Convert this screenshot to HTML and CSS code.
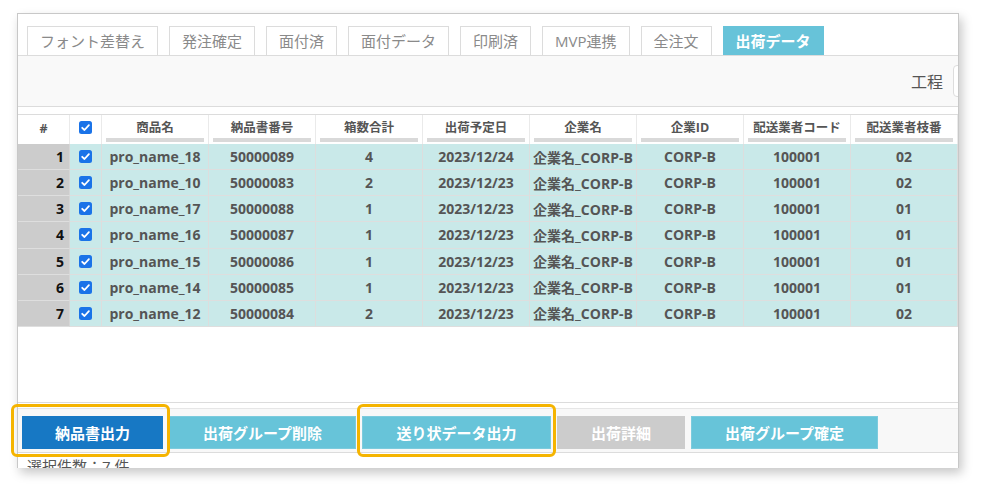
FILE: index.html
```html
<!DOCTYPE html>
<html lang="ja">
<head>
<meta charset="utf-8">
<link rel="stylesheet" href="styles.css">
</head>
<body>
<div class="shot">
  <div class="tabs">
    <div class="tab">フォント差替え</div>
    <div class="tab">発注確定</div>
    <div class="tab">面付済</div>
    <div class="tab">面付データ</div>
    <div class="tab">印刷済</div>
    <div class="tab">MVP連携</div>
    <div class="tab">全注文</div>
    <div class="tab active">出荷データ</div>
  </div>
  <div class="toolbar">
    <span class="label">工程</span>
    <div class="select"></div>
  </div>
  <div class="grid-area">
    <div class="row head">
      <div class="cell hnum">#</div>
      <div class="cell hchk"><svg class="cb" viewBox="0 0 13 13"><rect width="13" height="13" rx="2.5" fill="#1a73e8"/><path d="M3.2 6.8 L5.5 9 L9.9 4.2" fill="none" stroke="#fff" stroke-width="1.8" stroke-linecap="round" stroke-linejoin="round"/></svg></div>
      <div class="cell hcol"><span>商品名</span><i></i></div>
      <div class="cell hcol"><span>納品書番号</span><i></i></div>
      <div class="cell hcol"><span>箱数合計</span><i></i></div>
      <div class="cell hcol"><span>出荷予定日</span><i></i></div>
      <div class="cell hcol"><span>企業名</span><i></i></div>
      <div class="cell hcol"><span>企業ID</span><i></i></div>
      <div class="cell hcol"><span>配送業者コード</span><i></i></div>
      <div class="cell hcol"><span>配送業者枝番</span><i></i></div>
    </div>
    <div class="row">
      <div class="cell num">1</div><div class="cell chk"><svg class="cb" viewBox="0 0 13 13"><rect width="13" height="13" rx="2.5" fill="#1a73e8"/><path d="M3.2 6.8 L5.5 9 L9.9 4.2" fill="none" stroke="#fff" stroke-width="1.8" stroke-linecap="round" stroke-linejoin="round"/></svg></div>
      <div class="cell">pro_name_18</div><div class="cell">50000089</div><div class="cell">4</div><div class="cell">2023/12/24</div><div class="cell">企業名_CORP-B</div><div class="cell">CORP-B</div><div class="cell">100001</div><div class="cell">02</div>
    </div>
    <div class="row">
      <div class="cell num">2</div><div class="cell chk"><svg class="cb" viewBox="0 0 13 13"><rect width="13" height="13" rx="2.5" fill="#1a73e8"/><path d="M3.2 6.8 L5.5 9 L9.9 4.2" fill="none" stroke="#fff" stroke-width="1.8" stroke-linecap="round" stroke-linejoin="round"/></svg></div>
      <div class="cell">pro_name_10</div><div class="cell">50000083</div><div class="cell">2</div><div class="cell">2023/12/23</div><div class="cell">企業名_CORP-B</div><div class="cell">CORP-B</div><div class="cell">100001</div><div class="cell">02</div>
    </div>
    <div class="row">
      <div class="cell num">3</div><div class="cell chk"><svg class="cb" viewBox="0 0 13 13"><rect width="13" height="13" rx="2.5" fill="#1a73e8"/><path d="M3.2 6.8 L5.5 9 L9.9 4.2" fill="none" stroke="#fff" stroke-width="1.8" stroke-linecap="round" stroke-linejoin="round"/></svg></div>
      <div class="cell">pro_name_17</div><div class="cell">50000088</div><div class="cell">1</div><div class="cell">2023/12/23</div><div class="cell">企業名_CORP-B</div><div class="cell">CORP-B</div><div class="cell">100001</div><div class="cell">01</div>
    </div>
    <div class="row">
      <div class="cell num">4</div><div class="cell chk"><svg class="cb" viewBox="0 0 13 13"><rect width="13" height="13" rx="2.5" fill="#1a73e8"/><path d="M3.2 6.8 L5.5 9 L9.9 4.2" fill="none" stroke="#fff" stroke-width="1.8" stroke-linecap="round" stroke-linejoin="round"/></svg></div>
      <div class="cell">pro_name_16</div><div class="cell">50000087</div><div class="cell">1</div><div class="cell">2023/12/23</div><div class="cell">企業名_CORP-B</div><div class="cell">CORP-B</div><div class="cell">100001</div><div class="cell">01</div>
    </div>
    <div class="row">
      <div class="cell num">5</div><div class="cell chk"><svg class="cb" viewBox="0 0 13 13"><rect width="13" height="13" rx="2.5" fill="#1a73e8"/><path d="M3.2 6.8 L5.5 9 L9.9 4.2" fill="none" stroke="#fff" stroke-width="1.8" stroke-linecap="round" stroke-linejoin="round"/></svg></div>
      <div class="cell">pro_name_15</div><div class="cell">50000086</div><div class="cell">1</div><div class="cell">2023/12/23</div><div class="cell">企業名_CORP-B</div><div class="cell">CORP-B</div><div class="cell">100001</div><div class="cell">01</div>
    </div>
    <div class="row">
      <div class="cell num">6</div><div class="cell chk"><svg class="cb" viewBox="0 0 13 13"><rect width="13" height="13" rx="2.5" fill="#1a73e8"/><path d="M3.2 6.8 L5.5 9 L9.9 4.2" fill="none" stroke="#fff" stroke-width="1.8" stroke-linecap="round" stroke-linejoin="round"/></svg></div>
      <div class="cell">pro_name_14</div><div class="cell">50000085</div><div class="cell">1</div><div class="cell">2023/12/23</div><div class="cell">企業名_CORP-B</div><div class="cell">CORP-B</div><div class="cell">100001</div><div class="cell">01</div>
    </div>
    <div class="row">
      <div class="cell num">7</div><div class="cell chk"><svg class="cb" viewBox="0 0 13 13"><rect width="13" height="13" rx="2.5" fill="#1a73e8"/><path d="M3.2 6.8 L5.5 9 L9.9 4.2" fill="none" stroke="#fff" stroke-width="1.8" stroke-linecap="round" stroke-linejoin="round"/></svg></div>
      <div class="cell">pro_name_12</div><div class="cell">50000084</div><div class="cell">2</div><div class="cell">2023/12/23</div><div class="cell">企業名_CORP-B</div><div class="cell">CORP-B</div><div class="cell">100001</div><div class="cell">02</div>
    </div>
  </div>
  <div class="footer">
    <div class="btnbar">
      <div class="btn b1 primary">納品書出力</div>
      <div class="btn b2">出荷グループ削除</div>
      <div class="btn b3">送り状データ出力</div>
      <div class="btn b4 disabled">出荷詳細</div>
      <div class="btn b5">出荷グループ確定</div>
    </div>
    <div class="status">選択件数：7 件</div>
  </div>
</div>
<div class="hl hl1"></div>
<div class="hl hl2"></div>
</body>
</html>
```

FILE: styles.css
```css
html, body {
  margin: 0;
  padding: 0;
  background: #fff;
}
body {
  position: relative;
  width: 984px;
  height: 491px;
  overflow: hidden;
  font-family: "Open Sans", "Noto Sans CJK JP", sans-serif;
  color: #555;
}
.shot {
  margin: 13px 0 0 17px;
  width: 942px;
  height: 455px;
  box-sizing: border-box;
  border: 1px solid #c8c8c8;
  border-bottom: none;
  overflow: hidden;
  background: #fff;
  box-shadow: 3px 5px 10px rgba(0, 0, 0, 0.22);
}
.tabs {
  display: flex;
  gap: 11px;
  padding: 12px 0 0 9px;
  height: 41px;
  box-sizing: border-box;
}
.tab {
  height: 29px;
  box-sizing: border-box;
  padding: 0 12px;
  border: 1px solid #dcdcdc;
  border-bottom: none;
  font-size: 15px;
  line-height: 28px;
  color: #8a8a8a;
  white-space: nowrap;
  background: #fff;
}
.tab.active {
  background: #67c3d9;
  border-color: #67c3d9;
  color: #fff;
  font-weight: bold;
}
.toolbar {
  height: 52px;
  box-sizing: border-box;
  border-top: 1px solid #dcdcdc;
  border-bottom: 1px solid #dcdcdc;
  background: #f9f9f9;
  display: flex;
  justify-content: flex-end;
  align-items: center;
  gap: 10px;
}
.label {
  font-size: 16px;
  color: #555;
}
.select {
  width: 40px;
  height: 32px;
  margin-right: -35px;
  box-sizing: border-box;
  border: 1px solid #ddd;
  border-radius: 4px;
  background: #fff;
  flex: none;
}
.grid-area {
  margin-top: 7px;
  height: 288px;
  box-sizing: border-box;
  border-top: 1px solid #dcdcdc;
}
.row {
  display: grid;
  grid-template-columns: 52px 32px repeat(8, 107px);
  height: 26.15px;
}
.row.head {
  height: 29px;
}
.cell {
  box-sizing: border-box;
  border-right: 1px solid #dddddd;
  border-bottom: 1px solid #dedede;
  background: #c9e9e9;
  font-size: 14px;
  font-weight: bold;
  color: #555;
  display: flex;
  align-items: center;
  justify-content: center;
  white-space: nowrap;
}
.cell.num {
  background: #cccccc;
  color: #111;
  justify-content: flex-end;
  padding-right: 5px;
  border-right-color: #d6d6d6;
}
.row.head .cell {
  background: #fff;
  border-right: 1px solid #eaeaea;
  border-bottom: none;
  font-size: 12.5px;
  color: #555;
}
.hnum, .hchk {
  align-items: flex-start !important;
  padding-top: 5px;
}
.hchk .cb {
  margin-top: 1px;
}
.cb {
  width: 13px;
  height: 13px;
  display: block;
}
.hcol {
  flex-direction: column;
  justify-content: flex-start !important;
  align-items: stretch !important;
  padding: 4px 4px 0;
}
.hcol span {
  display: block;
  text-align: center;
  line-height: 17px;
}
.hcol i {
  display: block;
  height: 4px;
  margin-top: 2px;
  background: #d9d9d9;
}
.footer {
  border-top: 1px solid #dcdcdc;
}
.btnbar {
  margin-top: 5px;
  border-top: 1px solid #e6e6e6;
  border-bottom: 1px solid #dcdcdc;
  background: #f8f8f8;
  padding: 7px 0 3px 4px;
  display: flex;
  gap: 6px;
}
.btn {
  height: 33px;
  box-sizing: border-box;
  background: #67c4d9;
  color: #fff;
  font-size: 15px;
  font-weight: bold;
  display: flex;
  align-items: center;
  justify-content: center;
  border: 1px solid #7ccbdd;
}
.btn.primary {
  background: #1778c4;
  border-color: #1778c4;
}
.btn.disabled {
  background: #cccccc;
  border-color: #cccccc;
}
.b1 { width: 141px; }
.b2 { width: 187px; }
.b3 { width: 189px; }
.b4 { width: 128px; }
.b5 { width: 187px; }
.status {
  padding: 3px 9px;
  font-size: 15px;
  line-height: 20px;
  color: #555;
}
.hl {
  position: absolute;
  top: 404px;
  height: 53px;
  box-sizing: border-box;
  border: 3px solid #f5b400;
  border-radius: 6px;
}
.hl1 { left: 11px; width: 159px; }
.hl2 { left: 357px; width: 199px; }
```
